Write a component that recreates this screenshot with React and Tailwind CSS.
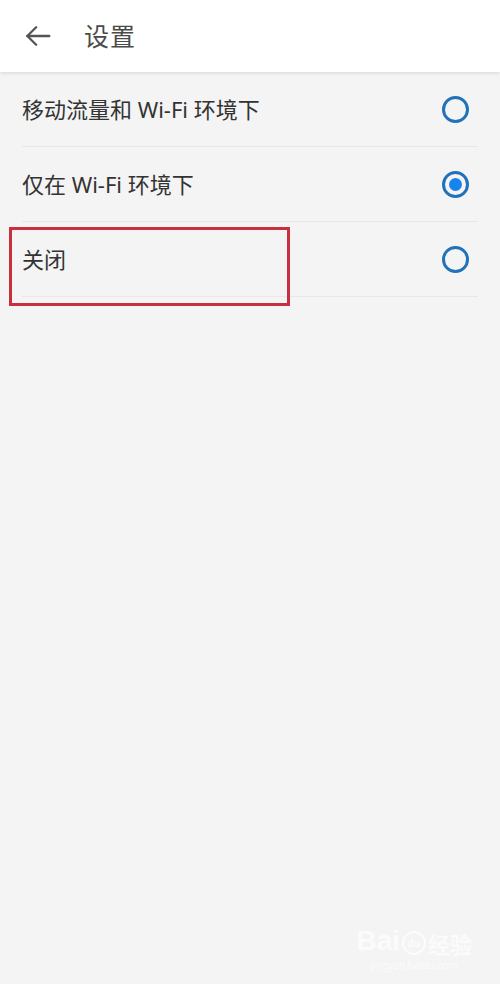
import { useState } from 'react';

const options = [
    { id: 'all', label: '移动流量和 Wi-Fi 环境下' },
    { id: 'wifi', label: '仅在 Wi-Fi 环境下' },
    { id: 'off', label: '关闭' },
];

const Radio = ({ checked }) => (
    <div className="w-[27px] h-[27px] rounded-full border-[3px] border-[#2172b8] flex items-center justify-center shrink-0">
        {checked && <div className="w-[13px] h-[13px] rounded-full bg-[#1683ee]" />}
    </div>
);

export default function App() {
    const [selected, setSelected] = useState('wifi');

    return (
        <div
            className="relative w-[500px] h-[984px] bg-[#f4f4f4] overflow-hidden"
            style={{ fontFamily: '"Noto Sans", "Noto Sans CJK SC", sans-serif' }}
        >
            {/* Header */}
            <div className="h-[72px] bg-white flex items-center shadow-[0_1px_4px_rgba(0,0,0,0.12)] relative z-10">
                <svg className="ml-[23px] w-[30px] h-[30px] text-[#555]" viewBox="0 0 24 24" fill="none" stroke="currentColor" strokeWidth="1.9" strokeLinecap="round" strokeLinejoin="round">
                    <path d="M21 12H3.5" />
                    <path d="M10.5 5l-7 7 7 7" />
                </svg>
                <h1 className="ml-[31px] text-[25px] text-[#4a4a4a] tracking-[1px] leading-none">设置</h1>
            </div>

            {/* Options */}
            <div className="pl-[22px] pr-[22px]">
                {options.map((opt) => (
                    <div
                        key={opt.id}
                        onClick={() => setSelected(opt.id)}
                        className="relative h-[75px] flex items-center justify-between cursor-pointer border-b border-[#e8e8e8]"
                    >
                        <span className="text-[22px] text-[#333] leading-none">{opt.label}</span>
                        <div className="mr-[9px]">
                            <Radio checked={selected === opt.id} />
                        </div>
                        {opt.id === 'off' && (
                            <div className="absolute left-[-13px] top-[5px] w-[281px] h-[79px] border-[3px] border-[#c9303e] pointer-events-none" />
                        )}
                    </div>
                ))}
            </div>

            {/* Watermark */}
            <div className="absolute right-[28px] bottom-[14px] flex flex-col items-center text-white/70 pointer-events-none">
                <div className="flex items-end gap-[2px]">
                    <span className="text-[28px] font-bold leading-none" style={{ fontFamily: '"Liberation Sans", sans-serif' }}>Bai</span>
                    <div className="w-[24px] h-[24px] rounded-full border-2 border-white/70 flex items-center justify-center text-[10px] font-bold leading-none">du</div>
                    <span className="text-[22px] font-bold leading-none">经验</span>
                </div>
                <span className="text-[10px] leading-none mt-[5px]">jingyan.baidu.com</span>
            </div>
        </div>
    );
}
